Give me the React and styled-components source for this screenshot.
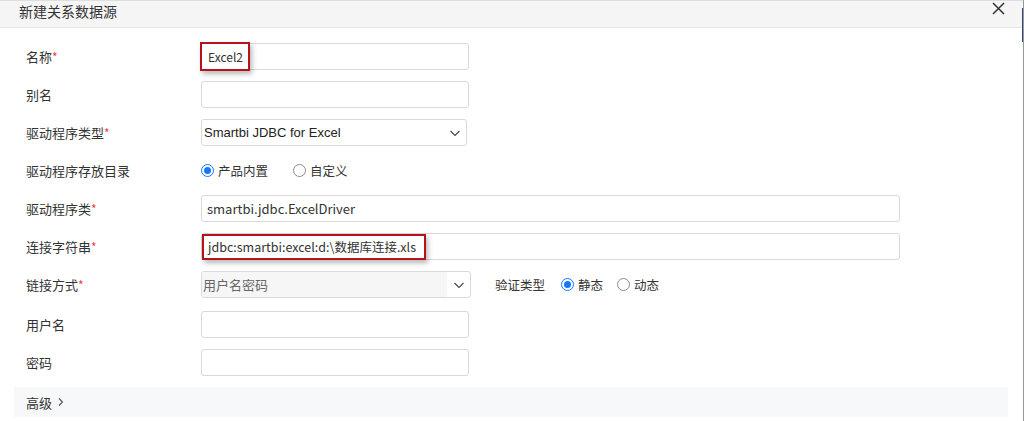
import React from 'react';
import styled, { createGlobalStyle } from 'styled-components';

const GlobalStyle = createGlobalStyle`
  html, body { margin: 0; padding: 0; background: #fff; }
  body {
    font-family: "Microsoft YaHei", "Noto Sans CJK SC", "Noto Sans", sans-serif;
    color: #333;
  }
`;

const Dialog = styled.div`
  width: 1024px;
  height: 421px;
  box-sizing: border-box;
  border-right: 1px solid #9a9a9a;
  position: relative;
  overflow: hidden;
`;

const ScrollMark = styled.div`
  position: absolute;
  right: -1px;
  top: 8px;
  width: 2px;
  height: 34px;
  background: #2e4a6b;
`;

const Header = styled.div`
  height: 28px;
  box-sizing: border-box;
  border-top: 1px solid #dedede;
  border-bottom: 1px solid #e6e6e6;
  background: #f5f5f5;
  display: flex;
  align-items: center;
  justify-content: space-between;
  padding: 0 18px 0 19px;
`;

const Title = styled.div`
  font-size: 14px;
  color: #333;
  line-height: 14px;
  margin-top: -6px;
`;

const Close = styled.svg`
  width: 13px;
  height: 13px;
  margin-top: -11px;
`;

const Body = styled.div`
  padding: 15px 0 0 26px;
  display: flex;
  flex-direction: column;
  gap: 11px;
`;

const Row = styled.div`
  display: flex;
  align-items: center;
  height: 27px;
  margin-bottom: ${p => p.$after || 0}px;
`;

const Label = styled.div`
  width: 175px;
  flex: none;
  font-size: 13px;
  color: #333;
  line-height: 27px;
`;

const Star = styled.span`
  color: #f04134;
  font-size: 12px;
`;

const Field = styled.div`
  width: ${p => p.$w}px;
  height: 27px;
  box-sizing: border-box;
  border: 1px solid #d9d9d9;
  border-radius: 3px;
  background: #fff;
  display: flex;
  align-items: center;
  padding-left: ${p => (p.$flush ? 0 : 5)}px;
  font-size: 13px;
  color: #333;
`;

const Highlight = styled.div`
  height: ${p => p.$h}px;
  box-sizing: border-box;
  margin-left: ${p => p.$ml}px;
  border: 2px solid #b3141c;
  padding: 0 ${p => p.$pr}px 0 ${p => p.$pl}px;
  display: flex;
  align-items: center;
  font-size: ${p => p.$fs}px;
  box-shadow: 2px 3px 5px rgba(0, 0, 0, 0.28);
  background: #fff;
  white-space: nowrap;
`;

const Select = styled.div`
  width: ${p => p.$w}px;
  height: 27px;
  box-sizing: border-box;
  border: 1px solid #d9d9d9;
  border-radius: 3px;
  display: flex;
  align-items: center;
  overflow: hidden;
  flex: none;
`;

const SelectValue = styled.div`
  flex: 1;
  height: 100%;
  display: flex;
  align-items: center;
  padding-left: ${p => p.$pl}px;
  background: ${p => (p.$muted ? '#f6f6f6' : '#fff')};
  color: ${p => (p.$muted ? '#666' : '#222')};
  font-size: 13px;
  font-family: ${p => (p.$latin ? '"Liberation Sans", Arial, sans-serif' : 'inherit')};
`;

const Chevron = styled.svg`
  width: 12px;
  height: 12px;
  margin: 0 5px 0 6px;
  flex: none;
`;

const RadioGroup = styled.div`
  display: flex;
  align-items: center;
  gap: ${p => p.$gap}px;
`;

const RadioItem = styled.div`
  display: flex;
  align-items: center;
  gap: 4px;
  font-size: 12.5px;
  color: #333;
`;

const Circle = styled.span`
  width: 13px;
  height: 13px;
  box-sizing: border-box;
  border-radius: 50%;
  border: 1px solid ${p => (p.$on ? '#1677ff' : '#8c8c8c')};
  display: flex;
  align-items: center;
  justify-content: center;
  &::after {
    content: '';
    width: 7px;
    height: 7px;
    border-radius: 50%;
    background: ${p => (p.$on ? '#1677ff' : 'transparent')};
  }
`;

const InlineLabel = styled.div`
  font-size: 12.5px;
  color: #333;
  margin: 0 16px 0 24px;
`;

const Advanced = styled.div`
  margin: 11px 15px 0 14px;
  height: 30px;
  background: #f7f8fa;
  display: flex;
  align-items: center;
  padding-left: 12px;
  gap: 5px;
  font-size: 13px;
  color: #333;
`;

const ChevronDown = () => (
  <Chevron viewBox="0 0 12 12">
    <path d="M1.5 4 L6 8.5 L10.5 4" fill="none" stroke="#444" strokeWidth="1.1" />
  </Chevron>
);

const Radio = ({ on, children }) => (
  <RadioItem>
    <Circle $on={on} />
    {children}
  </RadioItem>
);

const Req = ({ children }) => (
  <Label>
    {children}
    <Star>*</Star>
  </Label>
);

export default function App() {
  return (
    <>
      <GlobalStyle />
      <Dialog>
        <ScrollMark />
        <Header>
          <Title>新建关系数据源</Title>
          <Close viewBox="0 0 13 13">
            <path d="M1 1 L12 12 M12 1 L1 12" stroke="#333" strokeWidth="1.5" />
          </Close>
        </Header>
        <Body>
          <Row>
            <Req>名称</Req>
            <Field $w={268} $flush>
              <Highlight $h={29} $ml={-2} $pl={6} $pr={5} $fs={12}>Excel2</Highlight>
            </Field>
          </Row>
          <Row>
            <Label>别名</Label>
            <Field $w={268} />
          </Row>
          <Row>
            <Req>驱动程序类型</Req>
            <Select $w={266}>
              <SelectValue $pl={2} $latin>Smartbi JDBC for Excel</SelectValue>
              <ChevronDown />
            </Select>
          </Row>
          <Row>
            <Label>驱动程序存放目录</Label>
            <RadioGroup $gap={25}>
              <Radio on>产品内置</Radio>
              <Radio>自定义</Radio>
            </RadioGroup>
          </Row>
          <Row>
            <Req>驱动程序类</Req>
            <Field $w={699}>smartbi.jdbc.ExcelDriver</Field>
          </Row>
          <Row>
            <Req>连接字符串</Req>
            <Field $w={699} $flush>
              <Highlight $h={26} $ml={0} $pl={4} $pr={8} $fs={12.5}>
                jdbc:smartbi:excel:d:\数据库连接.xls
              </Highlight>
            </Field>
          </Row>
          <Row $after={2}>
            <Req>链接方式</Req>
            <Select $w={270}>
              <SelectValue $pl={1} $muted>用户名密码</SelectValue>
              <ChevronDown />
            </Select>
            <InlineLabel>验证类型</InlineLabel>
            <RadioGroup $gap={14}>
              <Radio on>静态</Radio>
              <Radio>动态</Radio>
            </RadioGroup>
          </Row>
          <Row>
            <Label>用户名</Label>
            <Field $w={268} />
          </Row>
          <Row>
            <Label>密码</Label>
            <Field $w={268} />
          </Row>
        </Body>
        <Advanced>
          高级
          <svg width="8" height="10" viewBox="0 0 8 10">
            <path d="M2 1.5 L5.5 5 L2 8.5" fill="none" stroke="#555" strokeWidth="1.1" />
          </svg>
        </Advanced>
      </Dialog>
    </>
  );
}
